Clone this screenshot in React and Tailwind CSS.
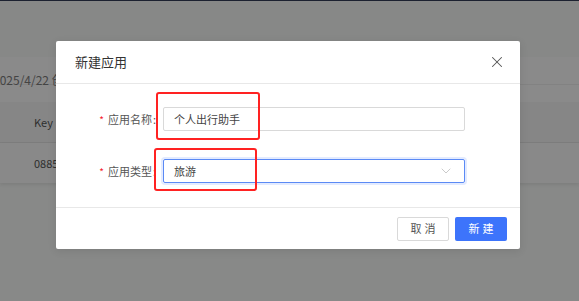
import React from "react";
import { ChevronDown, X, Info } from "lucide-react";

const font = { fontFamily: '"Noto Sans CJK SC", "Noto Sans", sans-serif' };

function Field({ label, colon, children }) {
  return (
    <div className="flex items-center">
      <div className="w-[102px] flex justify-end items-center text-[11px] text-[#555]">
        <span className="text-[#f5222d] mr-[4px] text-[10px]">*</span>
        <span>{label}</span>
        <span className="w-[6px] pl-[1px]">{colon ? ":" : ""}</span>
      </div>
      <div className="ml-[5px]">{children}</div>
    </div>
  );
}

export default function App() {
  return (
    <div className="relative w-[579px] h-[301px] overflow-hidden bg-[#888988]" style={font}>
      {/* page behind the mask */}
      <div className="h-[1px] bg-[#1c2130]" />
      <div className="h-[56px] bg-[#878887]" />
      <div className="h-[28px] bg-[#8a8a8a] border-b border-[#828282] pt-[17px] leading-[12px] text-[12px] text-[#444] -ml-[7px] whitespace-nowrap">
        2025/4/22 创建
      </div>
      <div className="h-[17px] bg-[#8a8a8a]" />
      <div className="h-[41px] bg-[#868686] border-b border-[#7d7d7d] flex items-center pl-[34px] text-[11px] text-[#2e2e2e]">
        Key
        <Info className="w-[10px] h-[10px] ml-[3px] text-[#2f4f9a]" strokeWidth={2} />
      </div>
      <div className="h-[40px] bg-[#898989] flex items-center pl-[34px] text-[11px] text-[#2e2e2e] shadow-[0_2px_3px_rgba(0,0,0,0.08)]">
        0885c1
      </div>

      {/* modal */}
      <div className="absolute left-[56px] top-[41px] w-[464px] h-[208px] bg-white rounded-[2px] flex flex-col shadow-[0_2px_8px_rgba(0,0,0,0.1)]">
        <div className="h-[43px] shrink-0 border-b border-[#e8e8e8] flex items-center justify-between pl-[19px] pr-[14px]">
          <span className="text-[13px] text-[#333]">新建应用</span>
          <X className="w-[18px] h-[18px] text-[#555]" strokeWidth={1.4} />
        </div>
        <div className="flex-1 flex flex-col gap-[28px] pt-[23px]">
          <Field label="应用名称" colon>
            <div className="w-[302px] h-[24px] border border-[#d9d9d9] rounded-[2px] flex items-center pl-[10px] text-[11px] text-[#444]">
              个人出行助手
            </div>
          </Field>
          <Field label="应用类型" colon>
            <div className="w-[302px] h-[24px] border border-[#5b8af5] rounded-[2px] shadow-[0_0_0_2px_rgba(64,120,255,0.15)] flex items-center justify-between pl-[10px] pr-[10px] text-[11px] text-[#444]">
              旅游
              <ChevronDown className="w-[16px] h-[16px] text-[#bdbdbd]" strokeWidth={1.2} />
            </div>
          </Field>
        </div>
        <div className="h-[42px] shrink-0 border-t border-[#e8e8e8] flex items-center justify-end gap-[6px] pr-[13px]">
          <button className="w-[52px] h-[24px] border border-[#d9d9d9] rounded-[2px] text-[11px] text-[#555] tracking-[3px] pl-[3px] bg-white">
            取消
          </button>
          <button className="w-[52px] h-[24px] rounded-[2px] text-[11px] text-white tracking-[3px] pl-[3px] bg-[#3d74fb]">
            新建
          </button>
        </div>
      </div>

      {/* red annotation boxes */}
      <div className="absolute left-[156px] top-[92px] w-[104px] h-[48px] border-[2.5px] border-[#ff2222] rounded-[3px]" />
      <div className="absolute left-[154px] top-[148px] w-[103px] h-[43px] border-[2.5px] border-[#ff2222] rounded-[3px]" />
    </div>
  );
}
